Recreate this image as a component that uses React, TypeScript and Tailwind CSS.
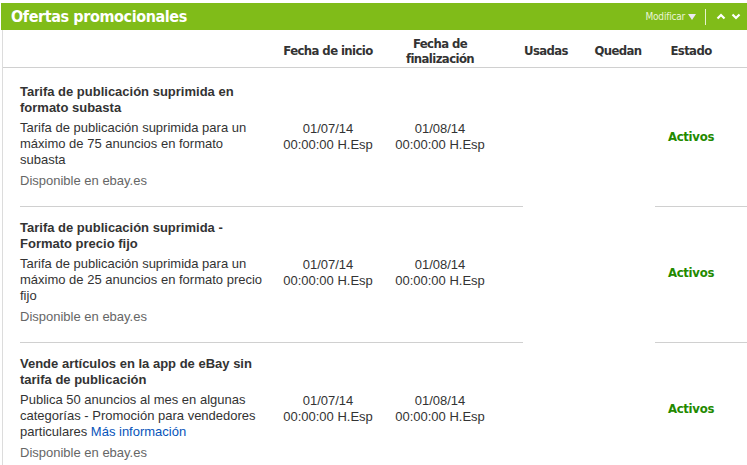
import React from 'react'

const narrow = 'font-["Liberation_Sans_Narrow","Arial_Narrow","DejaVu_Sans_Condensed",sans-serif]'

type Offer = {
  title: string
  description: React.ReactNode
  start: string
  end: string
  status: string
}

const offers: Offer[] = [
  {
    title: 'Tarifa de publicación suprimida en formato subasta',
    description: 'Tarifa de publicación suprimida para un máximo de 75 anuncios en formato subasta',
    start: '01/07/14',
    end: '01/08/14',
    status: 'Activos',
  },
  {
    title: 'Tarifa de publicación suprimida - Formato precio fijo',
    description: 'Tarifa de publicación suprimida para un máximo de 25 anuncios en formato precio fijo',
    start: '01/07/14',
    end: '01/08/14',
    status: 'Activos',
  },
  {
    title: 'Vende artículos en la app de eBay sin tarifa de publicación',
    description: (
      <>
        Publica 50 anuncios al mes en algunas categorías - Promoción para vendedores particulares{' '}
        <a href="#" className="inline-block leading-[16px] text-[#0654ba]">Más información</a>
      </>
    ),
    start: '01/07/14',
    end: '01/08/14',
    status: 'Activos',
  },
]

const cols = 'grid grid-cols-[267px_116px_108px_104px_40px_106px]'

export default function App() {
  return (
    <div className="h-[465px] w-[747px] overflow-hidden bg-white pt-[3px] font-['Liberation_Sans',Arial,sans-serif] text-[13px] text-[#333]">
      <div className="ml-[1px] flex h-[27px] items-center justify-between bg-[#80bc19] pl-[10px] pr-[6px]">
        <h2 className={`${narrow} text-[16px] font-bold tracking-[-0.4px] text-white`}>Ofertas promocionales</h2>
        <div className="flex items-center">
          <span className={`${narrow} text-[10px] tracking-[-0.2px] text-[#eaf5d6]`}>Modificar</span>
          <svg width="8" height="6" viewBox="0 0 8 6" className="ml-[3px] mt-[1px]">
            <path d="M0 0h8L4 6z" fill="#ece8f5" />
          </svg>
          <span className="mx-[9px] h-[16px] w-px bg-[#e6f3cf]" />
          <svg width="10" height="7" viewBox="0 0 10 7" className="ml-[1px]">
            <path d="M1.5 5.5L5 2L8.5 5.5" stroke="white" strokeWidth="2.2" fill="none" />
          </svg>
          <svg width="10" height="7" viewBox="0 0 10 7" className="ml-[5px]">
            <path d="M1.5 1.5L5 5L8.5 1.5" stroke="white" strokeWidth="2.2" fill="none" />
          </svg>
        </div>
      </div>

      <div className="ml-[2px] border-l border-[#dcdcdc]">
        <div className={`${cols} ${narrow} h-[38px] items-center border-b border-[#d0d0d0] pt-[4px] text-[13px] font-bold leading-[15px] tracking-[-0.6px] text-[#333]`}>
          <div />
          <div className="flex justify-center whitespace-nowrap">Fecha de inicio</div>
          <div className="flex justify-center text-center whitespace-nowrap">Fecha de<br />finalización</div>
          <div className="flex justify-center whitespace-nowrap">Usadas</div>
          <div className="flex justify-center whitespace-nowrap">Quedan</div>
          <div className="flex justify-center whitespace-nowrap">Estado</div>
        </div>

        {offers.map((offer, i) => (
          <div key={i}>
            <div className={`${cols} items-center ${i === 0 ? 'pt-[16px]' : 'pt-[13px]'} pb-[17px]`}>
              <div className="pl-[17px]">
                <div className="text-[13px] font-bold leading-[16px] text-[#333]">{offer.title}</div>
                <div className="mt-[4px] leading-[16px]">{offer.description}</div>
                <div className="mt-[5px] leading-[16px] text-[#666]">Disponible en ebay.es</div>
              </div>
              <div className="text-center leading-[16px]">
                {offer.start}
                <br />
                00:00:00 H.Esp
              </div>
              <div className="text-center leading-[16px]">
                {offer.end}
                <br />
                00:00:00 H.Esp
              </div>
              <div />
              <div />
              <div className={`${narrow} text-center text-[13px] font-bold tracking-[-0.3px] text-[#238a00]`}>{offer.status}</div>
            </div>
            <div className="flex">
              <div className="ml-[17px] h-px w-[503px] bg-[#d0d0d0]" />
              <div className="ml-[132px] h-px flex-1 bg-[#d0d0d0]" />
            </div>
          </div>
        ))}
      </div>
    </div>
  )
}
